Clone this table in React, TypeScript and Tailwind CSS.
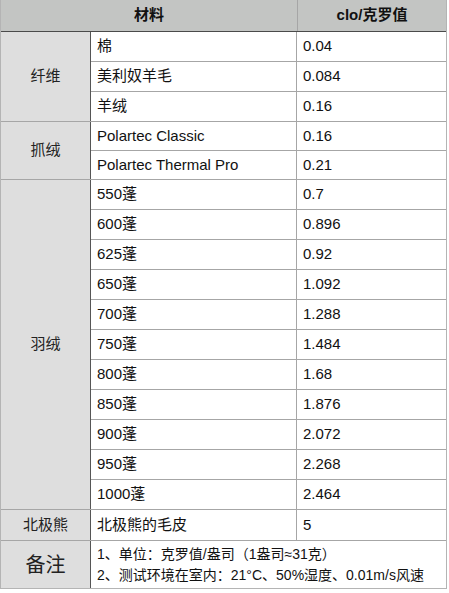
import React from 'react';

type Row = { name: string; clo: string };
type Group = { label: string; rows: Row[]; rowH: string; lastH: string };

const groups: Group[] = [
  {
    label: '纤维',
    rowH: 'h-[30px]',
    lastH: 'h-[29px]',
    rows: [
      { name: '棉', clo: '0.04' },
      { name: '美利奴羊毛', clo: '0.084' },
      { name: '羊绒', clo: '0.16' },
    ],
  },
  {
    label: '抓绒',
    rowH: 'h-[29px]',
    lastH: 'h-[28px]',
    rows: [
      { name: 'Polartec Classic', clo: '0.16' },
      { name: 'Polartec Thermal Pro', clo: '0.21' },
    ],
  },
  {
    label: '羽绒',
    rowH: 'h-[30px]',
    lastH: 'h-[29px]',
    rows: [
      { name: '550蓬', clo: '0.7' },
      { name: '600蓬', clo: '0.896' },
      { name: '625蓬', clo: '0.92' },
      { name: '650蓬', clo: '1.092' },
      { name: '700蓬', clo: '1.288' },
      { name: '750蓬', clo: '1.484' },
      { name: '800蓬', clo: '1.68' },
      { name: '850蓬', clo: '1.876' },
      { name: '900蓬', clo: '2.072' },
      { name: '950蓬', clo: '2.268' },
      { name: '1000蓬', clo: '2.464' },
    ],
  },
  {
    label: '北极熊',
    rowH: 'h-[30px]',
    lastH: 'h-[30px]',
    rows: [{ name: '北极熊的毛皮', clo: '5' }],
  },
];

export default function App() {
  return (
    <div className="w-[449px] h-[593px] bg-white font-['Liberation_Sans','Noto_Sans_CJK_SC',sans-serif] text-[15px] text-[#111]">
      <div className="w-[447px] border-l border-r border-b border-[#b4b4b4]">
        {/* header */}
        <div className="flex h-[32px] bg-[#c3c5c3] border-b border-[#4a4a4a] font-bold">
          <div className="w-[296px] flex items-center justify-center">材料</div>
          <div className="flex-1 flex items-center justify-center border-l border-[#a6a6a6]">clo/克罗值</div>
        </div>

        {groups.map((g) => (
          <div key={g.label} className="flex border-b border-[#a6a6a6]">
            <div className="w-[90px] shrink-0 bg-[#dedede] border-r border-[#555] flex items-center justify-center text-[#222]">
              {g.label}
            </div>
            <div className="flex-1 flex flex-col">
              {g.rows.map((r, i) => (
                <div
                  key={r.name}
                  className={`flex ${i < g.rows.length - 1 ? `${g.rowH} border-b border-[#a6a6a6]` : g.lastH}`}
                >
                  <div className="w-[206px] flex items-center pl-[6px] border-r border-[#a6a6a6] whitespace-nowrap">
                    {r.name}
                  </div>
                  <div className="flex-1 flex items-center pl-[6px]">{r.clo}</div>
                </div>
              ))}
            </div>
          </div>
        ))}

        {/* notes */}
        <div className="flex h-[47px]">
          <div className="w-[90px] shrink-0 bg-[#dedede] border-r border-[#555] flex items-center justify-center text-[20px] text-[#222]">
            备注
          </div>
          <div className="flex-1 flex flex-col justify-center pl-[6px] text-[14px] leading-[21px] whitespace-nowrap">
            <div>1、单位：克罗值/盎司（1盎司≈31克）</div>
            <div>2、测试环境在室内：21°C、50%湿度、0.01m/s风速</div>
          </div>
        </div>
      </div>
    </div>
  );
}
